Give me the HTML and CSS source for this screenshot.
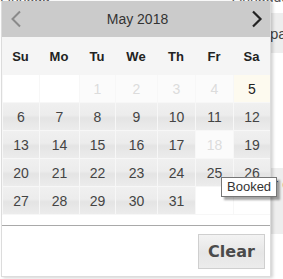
FILE: index.html
```html
<!DOCTYPE html>
<html>
<head>
<meta charset="utf-8">
<link rel="stylesheet" href="styles.css">
</head>
<body>
<div class="page">
  <div class="topline"><span class="tl-left">Linhodd</span><span class="tl-right">Linhoddd</span></div>
  <div class="bar bar1"><span>pa</span></div>
  <div class="bar bar2"><span>r c</span></div>
</div>

<div class="picker">
  <div class="head">
    <svg class="nav prev" width="12" height="18" viewBox="0 0 12 18"><path d="M10 1.5 L2.5 9 L10 16.5" fill="none" stroke="#8a8a8a" stroke-width="2"/></svg>
    <span class="title">May 2018</span>
    <svg class="nav next" width="12" height="18" viewBox="0 0 12 18"><path d="M2 1.5 L9.5 9 L2 16.5" fill="none" stroke="#222" stroke-width="2.2"/></svg>
  </div>
  <div class="dow">
    <span>Su</span><span>Mo</span><span>Tu</span><span>We</span><span>Th</span><span>Fr</span><span>Sa</span>
  </div>
  <div class="grid">
    <span class="c empty"></span><span class="c empty"></span>
    <span class="c off">1</span><span class="c off">2</span><span class="c off">3</span><span class="c off">4</span><span class="c today">5</span>
    <span class="c d">6</span><span class="c d">7</span><span class="c d">8</span><span class="c d">9</span><span class="c d">10</span><span class="c d">11</span><span class="c d">12</span>
    <span class="c d">13</span><span class="c d">14</span><span class="c d">15</span><span class="c d">16</span><span class="c d">17</span><span class="c off">18</span><span class="c d">19</span>
    <span class="c d">20</span><span class="c d">21</span><span class="c d">22</span><span class="c d">23</span><span class="c d">24</span><span class="c d">25</span><span class="c d">26</span>
    <span class="c d">27</span><span class="c d">28</span><span class="c d">29</span><span class="c d">30</span><span class="c d">31</span><span class="c empty"></span><span class="c empty"></span>
  </div>
  <div class="spacer"></div>
  <div class="foot">
    <button class="clear">Clear</button>
  </div>
</div>

<div class="tooltip">Booked</div>
</body>
</html>
```

FILE: styles.css
```css
html, body {
  margin: 0;
  padding: 0;
  background: #fff;
  font-family: "Liberation Sans", Arial, sans-serif;
  overflow: hidden;
}

.page {
  width: 283px;
  height: 279px;
  position: relative;
}

.topline {
  display: flex;
  justify-content: space-between;
  font-size: 14px;
  line-height: 14px;
  color: #555;
  margin-top: -10px;
}

.tl-right {
  margin-right: -6px;
}

.bar {
  background: #eeeeee;
  display: flex;
  justify-content: flex-end;
  font-size: 15px;
  color: #444;
}

.bar1 {
  margin-top: 9px;
  margin-left: 200px;
  height: 40px;
  align-items: center;
}

.bar1 span {
  width: 13px;
  overflow: hidden;
  white-space: nowrap;
}

.bar2 {
  margin-top: 115px;
  margin-left: 200px;
  height: 66px;
  padding-top: 7px;
  box-sizing: border-box;
}

.bar2 span {
  width: 10px;
  overflow: hidden;
  white-space: nowrap;
}

.picker {
  position: absolute;
  left: 1px;
  top: 1px;
  width: 268px;
  border: 1px solid #dcdcdc;
  border-top: 0;
  background: #fff;
  box-shadow: 2px 1px 3px rgba(0, 0, 0, 0.18);
}

.head {
  height: 36px;
  background: #cbcbcb;
  display: flex;
  align-items: center;
  justify-content: space-between;
  padding: 0 7px 0 8px;
}

.title {
  font-size: 14px;
  color: #333;
  margin-left: 2px;
}

.nav {
  display: block;
}

.dow {
  height: 38px;
  background: #f5f5f5;
  display: grid;
  grid-template-columns: 37px 40px 36px 42px 38px 38px 37px;
  align-items: center;
  font-weight: bold;
  font-size: 13px;
  color: #222;
  text-align: center;
}

.grid {
  display: grid;
  grid-template-columns: 37px 40px 36px 42px 38px 38px 37px;
  grid-auto-rows: 28px;
}

.c {
  box-sizing: border-box;
  border-left: 1px solid #f7f7f7;
  border-bottom: 1px solid #f7f7f7;
  display: flex;
  align-items: center;
  justify-content: center;
  font-size: 14px;
  color: #444;
}

.c.d {
  background: linear-gradient(#f0f0f0 0%, #ececec 45%, #e4e4e4 55%, #ececec 100%);
}

.c.off {
  background: #fbfbfb;
  color: #dcdcdc;
}

.c.today {
  background: #fdfaef;
  color: #222;
}

.c.empty {
  background: #fff;
}

.spacer {
  height: 10px;
  border-bottom: 1px solid #a9a9a9;
}

.foot {
  display: flex;
  justify-content: flex-end;
  padding: 8px 5px 7px 0;
}

.clear {
  width: 67px;
  height: 35px;
  border: 1px solid #cfcfcf;
  background: linear-gradient(#f3f3f3, #e6e6e6 55%, #ececec);
  font-family: "DejaVu Sans", Verdana, sans-serif;
  font-weight: bold;
  font-size: 16px;
  color: #4a4a4a;
  padding: 0;
}

.tooltip {
  position: absolute;
  left: 221px;
  top: 177px;
  border: 1px solid #767676;
  background: #fff;
  font-size: 13px;
  color: #333;
  padding: 2px 5px;
  line-height: 14px;
  box-shadow: 3px 3px 2px rgba(0, 0, 0, 0.35);
}
```
